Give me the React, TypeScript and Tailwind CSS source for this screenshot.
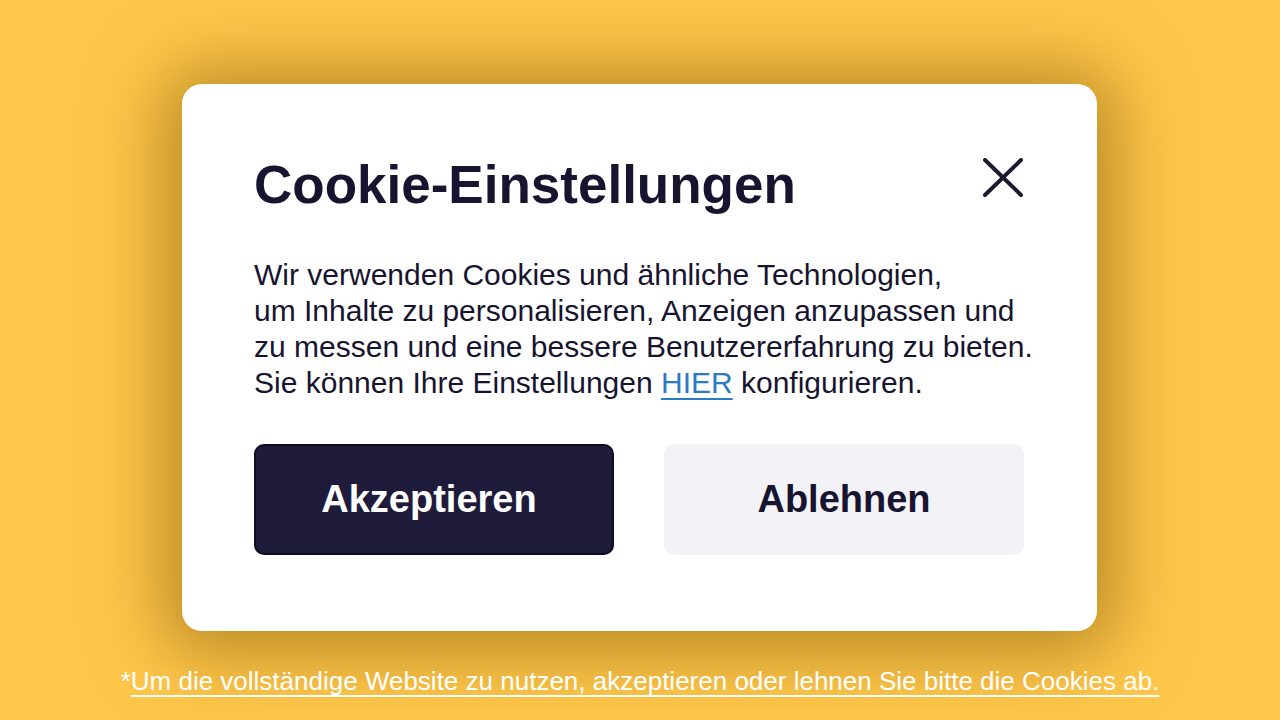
export default function App() {
  return (
    <div
      className="min-h-screen w-full bg-[#ffc74a] flex flex-col items-center pt-[84px]"
      style={{ fontFamily: '"Liberation Sans", Arial, sans-serif' }}
    >
      <div className="w-[915px] h-[547px] mr-[1px] bg-white rounded-[20px] shadow-[0_4px_70px_20px_rgba(120,80,0,0.5)] px-[72px] pt-[74px]">
        <div className="flex items-start justify-between">
          <h1 className="text-[53px] leading-none font-bold text-[#17142f]">Cookie-Einstellungen</h1>
          <button className="w-[40px] h-[40px] mr-[2px] text-[#1d1a30]" aria-label="Schließen">
            <svg viewBox="0 0 40 40" width="40" height="40" fill="none" stroke="currentColor" strokeWidth="4" strokeLinecap="round">
              <path d="M2 2 L38 37 M38 2 L2 37" />
            </svg>
          </button>
        </div>

        <p className="mt-[46px] text-[30px] leading-[36px] text-[#17142f] whitespace-nowrap">
          Wir verwenden Cookies und ähnliche Technologien,
          <br />
          um Inhalte zu personalisieren, Anzeigen anzupassen und
          <br />
          zu messen und eine bessere Benutzererfahrung zu bieten.
          <br />
          Sie können Ihre Einstellungen{' '}
          <a href="#" className="text-[#2b7bc4] underline decoration-2 underline-offset-[5px]">HIER</a>{' '}
          konfigurieren.
        </p>

        <div className="mt-[43px] flex gap-[50px]">
          <button className="w-[360px] h-[111px] pr-[10px] rounded-[10px] bg-[#1f1b3b] border-2 border-[#0e0c1f] text-white text-[38px] font-bold">
            Akzeptieren
          </button>
          <button className="w-[360px] h-[111px] rounded-[10px] bg-[#f3f3f7] text-[#17142f] text-[38px] font-bold">
            Ablehnen
          </button>
        </div>
      </div>

      <p className="mt-[35px] text-[26px] leading-[30px] text-white">
        *<span className="underline decoration-2 underline-offset-[5px]">Um die vollständige Website zu nutzen, akzeptieren oder lehnen Sie bitte die Cookies ab.</span>
      </p>
    </div>
  )
}
